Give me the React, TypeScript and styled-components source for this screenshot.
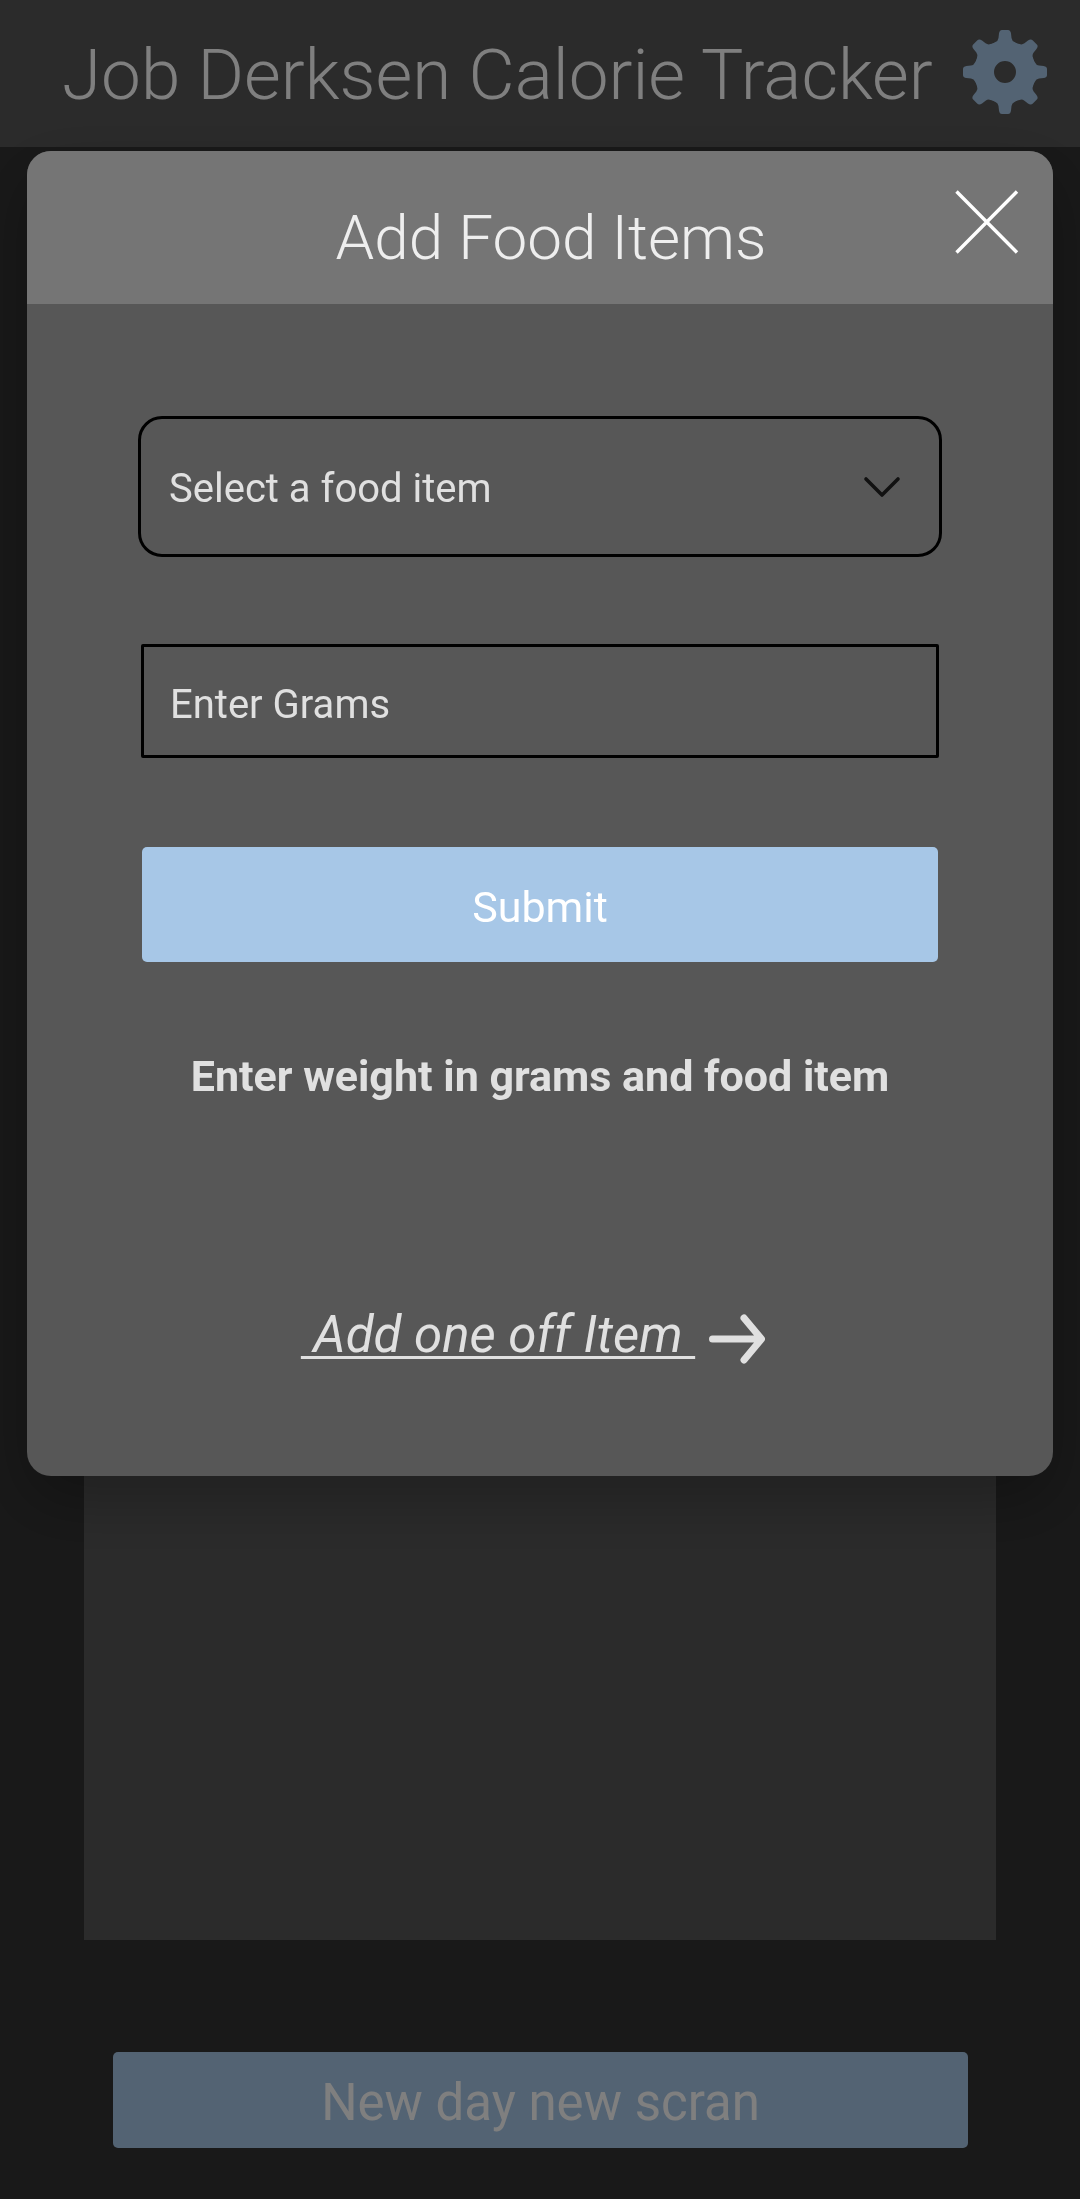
import React from "react";
import styled, { createGlobalStyle } from "styled-components";

const color = {
  page: "#333333",
  surface: "#575757",
  raised: "#757575",
  accent: "#a7c7e7",
  text: "#e0e0e0",
  title: "#eeeeee",
  line: "#000000",
};

const GlobalStyle = createGlobalStyle`
  *, *::before, *::after { box-sizing: border-box; }
  body {
    margin: 0;
    background: ${color.page};
    font-family: Roboto, "Liberation Sans", sans-serif;
  }
  button, input, select { font: inherit; }
`;

const Screen = styled.div`
  display: flex;
  flex-direction: column;
  min-height: 100vh;
  background: ${color.page};
`;

const AppBar = styled.header`
  display: flex;
  align-items: center;
  justify-content: space-between;
  padding: 30px 33px 33px 62px;
  background: ${color.surface};
`;

const AppTitle = styled.h1`
  margin: 0;
  padding-top: 6px;
  color: #ffffff;
  font-size: 71px;
  font-weight: 300;
  line-height: 78px;
  white-space: nowrap;
`;

const IconButton = styled.button`
  display: flex;
  padding: 0;
  border: 0;
  background: none;
  color: ${(p) => p.color};
  cursor: pointer;
`;

const Main = styled.main`
  display: flex;
  flex: 1;
  flex-direction: column;
  gap: 112px;
  padding: 112px 84px 51px;
`;

const FoodLog = styled.section`
  flex: 1;
  background: ${color.surface};
`;

const Button = styled.button<{ $size: number; $height: number }>`
  height: ${(p) => p.$height}px;
  padding: 4px 0 0;
  border: 0;
  border-radius: 5px;
  background: ${color.accent};
  color: #ffffff;
  font-size: ${(p) => p.$size}px;
  cursor: pointer;
`;

const NewDayButton = styled(Button)`
  margin: 0 28px 0 29px;
`;

const Backdrop = styled.div`
  position: fixed;
  inset: 0;
  padding: 151px 27px 0;
  background: rgba(0, 0, 0, 0.5);
`;

const Dialog = styled.section`
  border-radius: 24px;
  overflow: hidden;
  background: ${color.surface};
  box-shadow: 0 24px 64px rgba(0, 0, 0, 0.28);
`;

const DialogHeader = styled.header`
  display: grid;
  grid-template-columns: 64px 1fr 64px;
  align-items: start;
  padding: 39px 34px 33px 56px;
  background: ${color.raised};
`;

const DialogTitle = styled.h2`
  grid-column: 2;
  margin: 15px 0 0;
  color: ${color.title};
  font-size: 62px;
  font-weight: 300;
  line-height: 66px;
  text-align: center;
  white-space: nowrap;
`;

const Form = styled.form`
  display: flex;
  flex-direction: column;
  padding: 112px 111px 109px;
`;

const SelectField = styled.div`
  display: grid;
  align-items: center;
  height: 141px;

  > * { grid-area: 1 / 1; }
  > svg { justify-self: end; margin-right: 40px; pointer-events: none; }
`;

const Select = styled.select`
  appearance: none;
  width: 100%;
  height: 100%;
  padding: 3px 96px 0 28px;
  border: 3px solid ${color.line};
  border-radius: 24px;
  background: transparent;
  color: ${color.text};
  font-size: 40px;
`;

const Input = styled.input`
  height: 114px;
  margin: 87px 3px 0;
  padding: 6px 26px 0;
  border: 3px solid ${color.line};
  border-radius: 2px;
  background: transparent;
  color: ${color.text};
  font-size: 40px;

  &::placeholder { color: ${color.text}; opacity: 1; }
`;

const SubmitButton = styled(Button)`
  margin: 89px 4px 0;
`;

const Hint = styled.p`
  margin: 88px 0 0;
  color: ${color.text};
  font-size: 43px;
  font-weight: 700;
  line-height: 52px;
  text-align: center;
`;

const OneOffLink = styled.a`
  display: flex;
  align-items: center;
  align-self: center;
  gap: 14px;
  margin-top: 201px;
  margin-right: 14px;
  color: ${color.text};
  font-size: 51px;
  font-style: italic;
  line-height: 64px;
  text-decoration: none;

  > span {
    white-space: pre;
    text-decoration: underline;
    text-decoration-thickness: 3px;
    text-underline-offset: 4px;
  }
  > svg { margin-top: 8px; }
`;

function GearIcon() {
  return (
    <svg width="84" height="84" viewBox="-42 -42 84 84" aria-hidden="true">
      <circle r="21" fill="none" stroke="currentColor" strokeWidth="20" />
      {[0, 45, 90, 135, 180, 225, 270, 315].map((angle) => (
        <path
          key={angle}
          transform={`rotate(${angle})`}
          fill="currentColor"
          d="M-13-27Q-11-29.500-9.500-30Q-7-31-6.500-34L-6-38.500Q-5.500-42-3-42H3Q5.500-42 6-38.500L6.500-34Q7-31 9.500-30Q11-29.500 13-27Z"
        />
      ))}
    </svg>
  );
}

function CloseIcon() {
  return (
    <svg width="64" height="64" viewBox="0 0 64 64" fill="none" stroke="currentColor" strokeWidth="3.4" aria-hidden="true">
      <path d="M1.500 1.500 62 62.500M62 1.500 1.500 62.500" />
    </svg>
  );
}

function ChevronIcon() {
  return (
    <svg width="40" height="24" viewBox="0 0 40 24" fill="none" stroke="#111111" strokeWidth="3.600" strokeLinecap="round" strokeLinejoin="round" aria-hidden="true">
      <path d="M4 4 20 20 36 4" />
    </svg>
  );
}

function ArrowIcon() {
  return (
    <svg width="56" height="50" viewBox="0 0 56 50" fill="none" stroke="currentColor" strokeWidth="7" strokeLinecap="round" strokeLinejoin="round" aria-hidden="true">
      <path d="M3.500 25H52M35 4 52.500 25 35 46" />
    </svg>
  );
}

export default function App() {
  return (
    <>
      <GlobalStyle />
      <Screen>
        <AppBar>
          <AppTitle>Job Derksen Calorie Tracker</AppTitle>
          <IconButton type="button" color={color.accent} aria-label="Settings">
            <GearIcon />
          </IconButton>
        </AppBar>
        <Main>
          <FoodLog aria-label="Food log" />
          <NewDayButton type="button" $size={51} $height={96}>
            New day new scran
          </NewDayButton>
        </Main>
      </Screen>
      <Backdrop>
        <Dialog role="dialog" aria-modal="true" aria-labelledby="dialog-title">
          <DialogHeader>
            <DialogTitle id="dialog-title">Add Food Items</DialogTitle>
            <IconButton type="button" color="#ffffff" aria-label="Close">
              <CloseIcon />
            </IconButton>
          </DialogHeader>
          <Form onSubmit={(event) => event.preventDefault()}>
            <SelectField>
              <Select aria-label="Food item" defaultValue="">
                <option value="">Select a food item</option>
              </Select>
              <ChevronIcon />
            </SelectField>
            <Input type="text" inputMode="decimal" aria-label="Grams" placeholder="Enter Grams" />
            <SubmitButton type="submit" $size={43} $height={115}>
              Submit
            </SubmitButton>
            <Hint>Enter weight in grams and food item</Hint>
            <OneOffLink href="#one-off">
              <span> Add one off Item </span>
              <ArrowIcon />
            </OneOffLink>
          </Form>
        </Dialog>
      </Backdrop>
    </>
  );
}
